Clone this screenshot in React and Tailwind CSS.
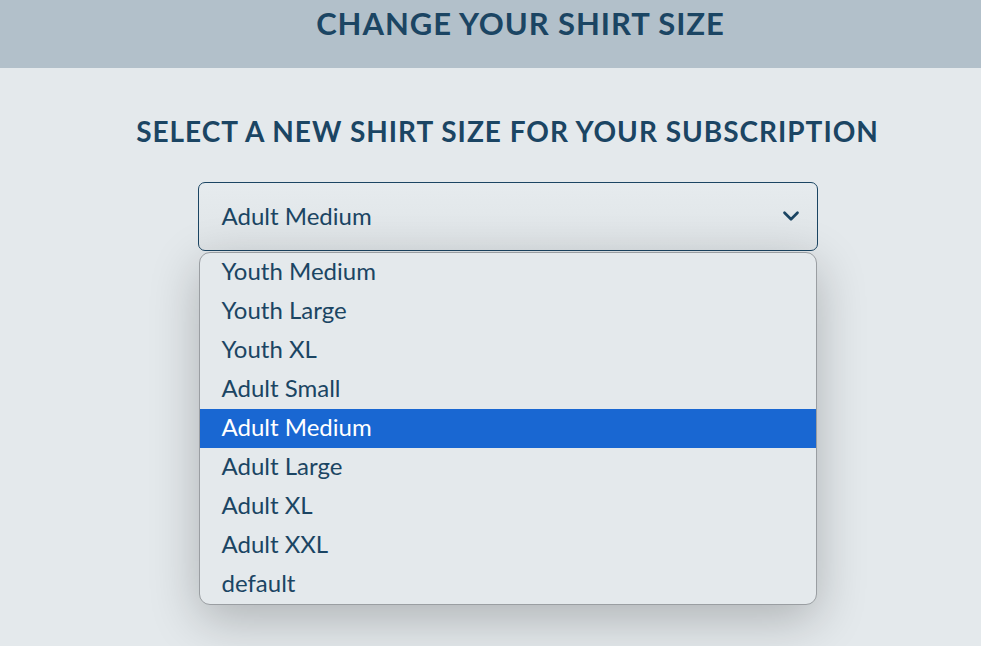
import { ChevronDown } from 'lucide-react'

const SIZES = [
  'Youth Medium',
  'Youth Large',
  'Youth XL',
  'Adult Small',
  'Adult Medium',
  'Adult Large',
  'Adult XL',
  'Adult XXL',
  'default',
]

export default function App() {
  const selected = 'Adult Medium'

  return (
    <div className="min-h-[646px] bg-[#e4e9ec] text-[#1b4563]" style={{ fontFamily: 'Lato, "Liberation Sans", sans-serif' }}>
      <header className="h-[68px] bg-[#b2c0ca] flex justify-center pl-[60px] pt-[3px]">
        <h1 className="text-[31px] font-bold tracking-[0.03em] leading-[40px]">CHANGE YOUR SHIRT SIZE</h1>
      </header>

      <main className="flex flex-col items-center pl-[34px] pt-[43px]">
        <h2 className="text-[28px] font-bold tracking-[0.035em] leading-[40px]">
          SELECT A NEW SHIRT SIZE FOR YOUR SUBSCRIPTION
        </h2>

        <div className="relative mt-[31px] w-[620px]">
          <div className="h-[69px] border border-[#1b4563] rounded-[7px] flex items-center justify-between pl-[23px] pr-[13px] pb-[2px] bg-gradient-to-b from-[#e6ebee] to-[#dfe4e7]">
            <span className="text-[24px]">{selected}</span>
            <ChevronDown className="w-[26px] h-[26px]" strokeWidth={2.5} />
          </div>

          <ul className="absolute left-[1px] top-[70px] w-[618px] bg-[#e4e9ec] border border-[#9a9ea2] rounded-[11px] overflow-hidden shadow-[0_14px_50px_rgba(0,0,0,0.24)]">
            {SIZES.map((s) => (
              <li
                key={s}
                className={
                  'h-[39px] flex items-center pl-[22px] pb-[3px] text-[24px] ' +
                  (s === selected ? 'bg-[#1967d2] text-white' : '')
                }
              >
                {s}
              </li>
            ))}
          </ul>
        </div>
      </main>
    </div>
  )
}
